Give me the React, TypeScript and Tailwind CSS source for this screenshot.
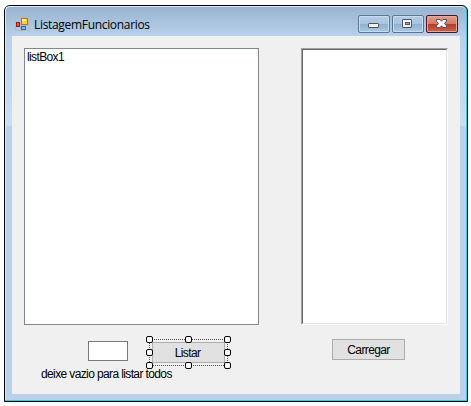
import React from "react";

const handles = [
  "left-[-3px] top-[-3px]",
  "left-[36px] top-[-3px]",
  "left-[75px] top-[-3px]",
  "left-[-3px] top-[10px]",
  "left-[75px] top-[10px]",
  "left-[-3px] top-[23px]",
  "left-[36px] top-[23px]",
  "left-[75px] top-[23px]",
];

function FormIcon() {
  return (
    <svg width="14" height="14" viewBox="0 0 14 14" shapeRendering="crispEdges">
      <path d="M.5 .5h13v13H.5zM5.500 .5v13M.5 8.500h13" fill="none" stroke="#b4b9bf" />
      <rect x="6" y="1" width="7" height="7" fill="#b27a10" />
      <rect x="7" y="2" width="5" height="5" fill="#f9cf45" />
      <rect x="7" y="2" width="4" height="2" fill="#ffe795" />
      <rect x="1" y="5" width="4" height="5" fill="#a51512" />
      <rect x="2" y="6" width="2" height="3" fill="#e9594a" />
      <rect x="6" y="9" width="5" height="4" fill="#3765bd" />
      <rect x="7" y="10" width="3" height="2" fill="#7fb0f5" />
    </svg>
  );
}

function CaptionButton({ kind }: { kind: "min" | "max" | "close" }) {
  const close = kind === "close";
  return (
    <button
      className={
        "flex h-[18px] w-8 items-center justify-center rounded-[2px] border " +
        (close
          ? "border-[#4c1420] bg-[linear-gradient(#dfa18f_0%,#cf7b68_48%,#b53a24_50%,#c9664c_100%)] shadow-[inset_0_0_0_1px_#e2aa9c]"
          : "border-[#5d7693] bg-[linear-gradient(#b5cde5_0%,#a9c4df_48%,#8eafce_50%,#a9c9e5_100%)] shadow-[inset_0_0_0_1px_#c8dcef]")
      }
    >
      <svg width="12" height="10" viewBox="0 0 12 10">
        {kind === "min" && (
          <rect x=".5" y="4.500" width="10" height="4" rx=".5" fill="#f5f3ec" stroke="#505469" />
        )}
        {kind === "max" && (
          <>
            <rect x=".5" y=".5" width="9" height="8" rx=".5" fill="#f5f4f2" stroke="#505469" />
            <rect x="3.500" y="3.500" width="4" height="2" fill="#8fb0d0" stroke="#505469" />
          </>
        )}
        {close && (
          <path
            d="M.5 .5h3.500L5.500 2.200 7 .5h3.500v1.700L8.500 4.500l2 2.300v1.700H7L5.500 6.800 4 8.500H.5V6.800l2-2.300-2-2.300z"
            fill="#f6f6f6"
            stroke="#585466"
          />
        )}
      </svg>
    </button>
  );
}

export default function App() {
  return (
    <div className="h-[406px] w-[471px] overflow-hidden bg-white pl-1 pt-[5px] font-['Liberation_Sans',Arial,sans-serif] text-[12px] leading-[13px] tracking-[-0.62px] text-black">
      <div className="h-[397px] w-[464px] rounded-t-[6px] border border-black bg-[#1dd3ee] pb-px pr-px">
        <div className="h-full w-full rounded-t-[5px] border-l border-t border-[#dbe9f7] bg-[linear-gradient(#99b4d1_0px,#b9d1ea_30px,#c9def2_118px,#b9d1ea_120px)] pl-1.5">
          <header className="flex h-[29px] items-start pl-[3px] pt-2">
            <div className="pt-[2px]">
              <FormIcon />
            </div>
            <h1 className="ml-[5px] mt-[2px] w-[324px] whitespace-nowrap font-['Open_Sans','Noto_Sans',sans-serif] text-[12px] leading-4 tracking-[-0.32px]">
              ListagemFuncionarios
            </h1>
            <div className="flex gap-[2px]">
              <CaptionButton kind="min" />
              <CaptionButton kind="max" />
              <CaptionButton kind="close" />
            </div>
          </header>
          <main className="h-[358px] w-[448px] bg-[#f0f0f0] pl-3 pt-3">
            <div className="flex gap-[42px]">
              <div className="h-[277px] w-[235px] border border-[#828790] bg-white pl-[2px] pt-[2px]">
                listBox1
              </div>
              <div className="h-[277px] w-[147px] border border-b-white border-l-[#a0a0a0] border-r-white border-t-[#a0a0a0]">
                <div className="h-full border border-b-[#e3e3e3] border-l-[#696969] border-r-[#e3e3e3] border-t-[#696969] bg-white" />
              </div>
            </div>
            <div className="flex h-[43px] items-start">
              <div className="ml-16 mt-4 h-5 w-10 border border-[#7a7a7a] bg-white" />
              <div className="relative ml-[21px] mt-3.5 h-[27px] w-[79px] p-[3px]">
                <svg className="absolute left-0 top-0" width="79" height="27" viewBox="0 0 79 27" shapeRendering="crispEdges">
                  <rect x=".5" y=".5" width="78" height="26" fill="none" stroke="#555" strokeDasharray="1 1" />
                </svg>
                <button className="flex h-[21px] w-[73px] items-center justify-center border border-[#adadad] bg-[#e1e1e1] pr-[2px] pt-px">
                  Listar
                </button>
                {handles.map((place) => (
                  <i key={place} className={"absolute h-[7px] w-[7px] rounded-[2px] border border-black bg-white " + place} />
                ))}
              </div>
              <button className="ml-[104px] mt-3.5 h-[21px] w-[73px] border border-[#adadad] bg-[#e1e1e1] pt-px">
                Carregar
              </button>
            </div>
            <p className="ml-[17px] whitespace-nowrap">deixe vazio para listar todos</p>
          </main>
        </div>
      </div>
    </div>
  );
}
